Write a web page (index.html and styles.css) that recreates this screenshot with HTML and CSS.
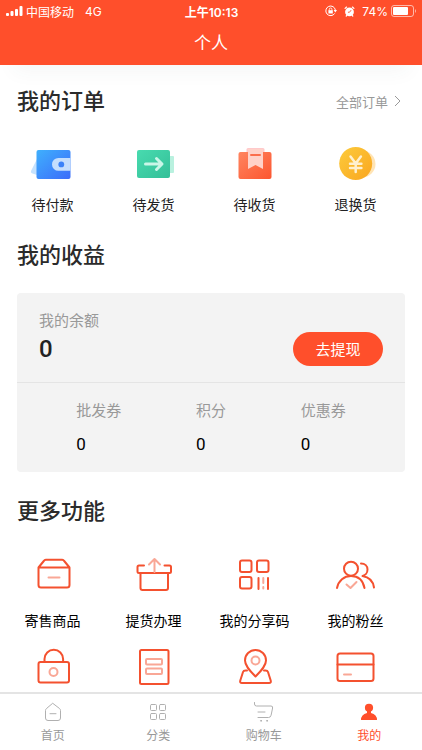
FILE: index.html
```html
<!DOCTYPE html>
<html lang="zh-CN">
<head>
    <meta charset="UTF-8">
    <meta name="viewport" content="width=device-width, initial-scale=1.0">
    <title>个人</title>
    <link rel="stylesheet" href="styles.css">
</head>
<body>

    <header class="header">
        <div class="status-bar">
            <div class="status-left">
                <svg width="17" height="12" viewBox="0 0 17 12" fill="#fff">
                    <rect x="0" y="8" width="3" height="3" rx="1"/>
                    <rect x="4.500" y="6" width="3" height="5" rx="1"/>
                    <rect x="9" y="4" width="3" height="7" rx="1"/>
                    <rect x="13.500" y="1" width="3" height="10" rx="1"/>
                </svg>
                <span>中国移动</span>
                <span class="network">4G</span>
            </div>
            <div class="time">上午10:13</div>
            <div class="status-right">
                <svg width="12" height="12" viewBox="0 0 12 12" fill="none" stroke="#fff">
                    <path d="M9.7 8.4A4.8 4.8 0 1 1 10.4 5.2"/>
                    <path d="M8.6 5h3.4l-1.7 2.4z" fill="#fff" stroke="none"/>
                    <rect x="3.4" y="5.2" width="4.4" height="3.3" fill="#fff" stroke="none"/>
                    <path d="M4.3 5.5V4.3a1.3 1.3 0 0 1 2.6 0v1.2" stroke-width=".8"/>
                </svg>
                <svg class="alarm" width="11" height="11" viewBox="0 0 12 12">
                    <circle cx="6" cy="6.5" r="4.8" fill="#fff"/>
                    <path d="M1.2 2.6L2.8 1.2M10.800 2.6L9.2 1.2M3 10.200l-.6.8M9 10.200l.6.8" stroke="#fff" stroke-width="1.4" stroke-linecap="round"/>
                    <path d="M7.800 4.500L6 6.800H4.300" fill="none" stroke="#ff4f2b"/>
                </svg>
                <span>74%</span>
                <svg width="26" height="12" viewBox="0 0 26 12">
                    <rect x=".5" y=".5" width="22" height="11" rx="2.5" fill="none" stroke="#fff" stroke-opacity=".6"/>
                    <rect x="2" y="2" width="15" height="8" rx="1" fill="#fff"/>
                    <path d="M24 4q2 2 0 4z" fill="#fff" fill-opacity=".6"/>
                </svg>
            </div>
        </div>
        <h1 class="page-title">个人</h1>
    </header>

    <main class="content">
        <section class="orders">
            <div class="section-head">
                <h2>我的订单</h2>
                <a class="all-orders" href="#">全部订单
                    <svg width="7" height="12" viewBox="0 0 7 12" fill="none" stroke="#999"><path d="M1 1l5 5-5 5"/></svg>
                </a>
            </div>
            <div class="menu">
                <a class="menu-item" href="#">
                    <svg class="icon" viewBox="0 0 40 40">
                        <defs>
                            <linearGradient id="blue" x1="0" y1="0" x2="1" y2="1"><stop offset="0" stop-color="#3fb0fd"/><stop offset="1" stop-color="#3c6cfa"/></linearGradient>
                        </defs>
                        <path d="M4 15L-2 27q-.6 1.6.8 2.2L4 31z" fill="#c5e2fe"/>
                        <rect x="3.5" y="6" width="34" height="29" rx="2" fill="url(#blue)"/>
                        <path d="M37.5 14H25.4a6.4 6.4 0 0 0 0 12.8H37.5z" fill="#c4defd"/>
                        <circle cx="28.3" cy="20.4" r="2.9" fill="#3b82f8"/>
                    </svg>
                    <span>待付款</span>
                </a>
                <a class="menu-item" href="#">
                    <svg class="icon" viewBox="0 0 40 40">
                        <defs>
                            <linearGradient id="green" x1="0" y1="0" x2="1" y2="1"><stop offset="0" stop-color="#48dbaf"/><stop offset="1" stop-color="#34bf98"/></linearGradient>
                        </defs>
                        <rect x="30" y="12" width="10" height="17" rx="1" fill="#b9f1df"/>
                        <rect x="3" y="6" width="33" height="28" rx="2" fill="url(#green)"/>
                        <path d="M11.5 20H27M22.5 14.5L28 20l-5.5 5.5" fill="none" stroke="#c9f6e8" stroke-width="3" stroke-linecap="round" stroke-linejoin="round"/>
                    </svg>
                    <span>待发货</span>
                </a>
                <a class="menu-item" href="#">
                    <svg class="icon" viewBox="0 0 40 40">
                        <defs>
                            <linearGradient id="red" x1="0" y1="0" x2="1" y2="1"><stop offset="0" stop-color="#ff8560"/><stop offset="1" stop-color="#fc5630"/></linearGradient>
                        </defs>
                        <rect x="3.5" y="8" width="33" height="27" rx="2" fill="url(#red)"/>
                        <path d="M13 4h15q1.5 0 1.5 1.5V8h-18V5.5Q11.5 4 13 4z" fill="#ffc9cb"/>
                        <path d="M13 5h15v20l-7.500-4L13 25z" fill="#ffd2c9"/>
                        <path d="M16 11h9" stroke="#fb6e4c" stroke-width="2" stroke-linecap="round"/>
                    </svg>
                    <span>待收货</span>
                </a>
                <a class="menu-item" href="#">
                    <svg class="icon" viewBox="0 0 40 40">
                        <defs>
                            <linearGradient id="gold" x1="0" y1="0" x2="1" y2="1"><stop offset="0" stop-color="#fccb3c"/><stop offset="1" stop-color="#faa61f"/></linearGradient>
                        </defs>
                        <circle cx="26" cy="20" r="13.5" fill="#ffe4b5"/>
                        <circle cx="19.7" cy="19.5" r="16.5" fill="url(#gold)"/>
                        <path d="M14.5 12.5l5.2 7 5.2-7M19.7 19.5V28M14 19.7h11.4M14 24h11.4" fill="none" stroke="#fff0cf" stroke-width="2.5" stroke-linecap="round"/>
                    </svg>
                    <span>退换货</span>
                </a>
            </div>
        </section>

        <section class="income">
            <div class="section-head">
                <h2>我的收益</h2>
            </div>
            <div class="card">
                <div class="balance">
                    <div>
                        <p class="label">我的余额</p>
                        <p class="amount">0</p>
                    </div>
                    <button class="withdraw" type="button">去提现</button>
                </div>
                <div class="stats">
                    <div><p class="label">批发券</p><p class="value">0</p></div>
                    <div><p class="label">积分</p><p class="value">0</p></div>
                    <div><p class="label">优惠券</p><p class="value">0</p></div>
                </div>
            </div>
        </section>

        <section class="more">
            <div class="section-head">
                <h2>更多功能</h2>
            </div>
            <div class="menu">
                <a class="menu-item" href="#">
                    <svg class="icon line" viewBox="0 0 40 40">
                        <path d="M5.5 12.5h31V30q0 2.5-2.5 2.5H8q-2.5 0-2.5-2.5zL10.8 6q.7-1.2 2-1.2h16.4q1.3 0 2 1.2l5.3 6.5"/>
                        <path class="soft" d="M15.5 22.5h11"/>
                    </svg>
                    <span>寄售商品</span>
                </a>
                <a class="menu-item" href="#">
                    <svg class="icon line" viewBox="0 0 40 40">
                        <path d="M10 10.5H5q-1.500 0-1.500 1.500v4.500Q3.500 18 5 18h30.500q1.500 0 1.500-1.500V12q0-1.500-1.500-1.500h-5M6.500 18v15q0 2 2 2H32q2 0 2-2V18"/>
                        <path class="soft" d="M20.500 17V4M15 9.500L20.500 4l5.500 5.500"/>
                    </svg>
                    <span>提货办理</span>
                </a>
                <a class="menu-item" href="#">
                    <svg class="icon line" viewBox="0 0 40 40">
                        <rect x="5" y="5.5" width="11.5" height="11.5" rx="2"/>
                        <rect x="22" y="5.5" width="11.5" height="11.5" rx="2"/>
                        <rect x="5" y="22" width="11.5" height="11.5" rx="2"/>
                        <path d="M23.500 23v11M33 23v11"/>
                        <path class="soft" d="M28.300 23v5M28.300 32v1.500"/>
                    </svg>
                    <span>我的分享码</span>
                </a>
                <a class="menu-item" href="#">
                    <svg class="icon line" viewBox="0 0 40 40">
                        <circle cx="15" cy="13.7" r="7"/>
                        <path d="M1 33C2.500 25.500 8 21 15 21s12 4.500 13.500 12M25 8.500c4 0 6.500 2.500 6.500 6S29 20.500 26.500 21c6.500 1 10.500 5 11.500 11.500"/>
                        <path class="soft" d="M10.500 29.500l4 3.500 6-6"/>
                    </svg>
                    <span>我的粉丝</span>
                </a>
                <a class="menu-item" href="#" aria-label="密码">
                    <svg class="icon line" viewBox="0 0 40 40">
                        <rect x="5.5" y="15" width="30.5" height="20.5" rx="2"/>
                        <path d="M11.5 15v-3a9.300 9.300 0 0 1 18.600 0v3"/>
                        <circle class="soft" cx="20.5" cy="25" r="4"/>
                    </svg>
                </a>
                <a class="menu-item" href="#" aria-label="订单">
                    <svg class="icon line" viewBox="0 0 40 40">
                        <rect x="6" y="3" width="28.5" height="34" rx="1.5"/>
                        <rect class="soft" x="12" y="12" width="16" height="5.5" rx="1"/>
                        <rect class="soft" x="12" y="21.5" width="16" height="5.5" rx="1"/>
                    </svg>
                </a>
                <a class="menu-item" href="#" aria-label="地址">
                    <svg class="icon line" viewBox="0 0 40 40">
                        <path d="M20.5 29.5C14 23 10 18.5 10 13.5a10.5 10.5 0 0 1 21 0c0 5-4 9.5-10.5 16z"/>
                        <path d="M12 23.5h-1.5q-2 0-2.5 1.5L5.3 33.5q-.7 2.5 1.7 2.5h27q2.4 0 1.7-2.5L33 25q-.5-1.500-2.500-1.500H29"/>
                        <circle class="soft" cx="20.5" cy="13.5" r="4"/>
                    </svg>
                </a>
                <a class="menu-item" href="#" aria-label="银行卡">
                    <svg class="icon line" viewBox="0 0 40 40">
                        <rect x="1.5" y="6.5" width="36" height="27.5" rx="2.5"/>
                        <path d="M1.5 17.5h36"/>
                        <path class="soft" d="M8 27.5h7"/>
                    </svg>
                </a>
            </div>
        </section>
    </main>

    <nav class="tab-bar">
        <a class="tab" href="#">
            <svg viewBox="0 0 24 24">
                <path d="M12 3.5l6.5 5q1 .8 1 2V18q0 2.5-2.5 2.5H7Q4.5 20.500 4.500 18v-7.500q0-1.200 1-2zM9 13.700h6"/>
            </svg>
            <span>首页</span>
        </a>
        <a class="tab" href="#">
            <svg viewBox="0 0 24 24">
                <rect x="4.5" y="4.5" width="6" height="6" rx="1"/>
                <rect x="13.5" y="4.5" width="6" height="6" rx="1"/>
                <rect x="4.5" y="13.5" width="6" height="6" rx="1"/>
                <rect x="13.5" y="13.5" width="6" height="6" rx="1"/>
            </svg>
            <span>分类</span>
        </a>
        <a class="tab" href="#">
            <svg viewBox="0 0 24 24">
                <path d="M2.5 2.5v1.500q0 2 2 2H19q2 0 1.600 2l-1.500 7.200q-.5 2.300-2.600 2.300H6M6 12h7"/>
                <circle cx="9" cy="20.8" r=".5"/>
                <circle cx="15" cy="20.8" r=".5"/>
            </svg>
            <span>购物车</span>
        </a>
        <a class="tab active" href="#">
            <svg viewBox="0 0 24 24">
                <circle cx="12" cy="7.8" r="4.1"/>
                <path d="M10 11h4v2q6 1.500 6 7H4q0-5.500 6-7z"/>
            </svg>
            <span>我的</span>
        </a>
    </nav>

</body>
</html>
```

FILE: styles.css
```css
* {
    box-sizing: border-box;
}
body {
    display: flex;
    flex-direction: column;
    height: 100vh;
    margin: 0;
    background: #fff;
    color: #222;
    font-family: Inter, "Noto Sans CJK SC", sans-serif;
}
h1, h2, p {
    margin: 0;
}
a {
    color: inherit;
    text-decoration: none;
}
svg {
    display: block;
    flex: none;
}
.header {
    position: relative;
    background: #ff4f2b;
    color: #fff;
    box-shadow: 0 20px 20px -14px rgba(60,80,80,0.05);
}
.status-bar {
    display: grid;
    grid-template-columns: 1fr auto 1fr;
    align-items: center;
    height: 22px;
    padding: 0 5px 0 6px;
    font-size: 12px;
}
.status-left, .status-right {
    display: flex;
    align-items: center;
    gap: 3px;
}
.status-right {
    justify-content: flex-end;
}
.network {
    margin-left: 8px;
}
.alarm {
    margin: 0 4px;
}
.time {
    font-weight: 600;
}
.page-title {
    height: 43px;
    line-height: 42px;
    font-size: 17px;
    font-weight: 400;
    text-align: center;
}
.content {
    flex: 1;
    min-height: 0;
    overflow: hidden;
    padding-top: 21px;
}
.section-head {
    display: flex;
    justify-content: space-between;
    align-items: center;
    height: 30px;
    padding: 0 21px 0 17px;
}
.section-head h2 {
    font-size: 22px;
    line-height: 30px;
    font-weight: 500;
    color: #2b2b2b;
}
.all-orders {
    display: flex;
    align-items: center;
    gap: 6px;
    font-size: 13px;
    color: #999;
}
.menu {
    display: grid;
    grid-template-columns: repeat(4, 1fr);
    row-gap: 16px;
    padding: 28px 16px 0 2px;
}
.menu-item {
    display: flex;
    flex-direction: column;
    align-items: center;
    gap: 11px;
    font-size: 14px;
    line-height: 20px;
}
.icon {
    width: 40px;
    height: 40px;
    overflow: visible;
}
.line {
    fill: none;
    stroke: #f4512f;
    stroke-width: 2;
    stroke-linecap: round;
    stroke-linejoin: round;
}
.line .soft {
    stroke: #f9a796;
}
.income {
    padding-top: 25px;
}
.card {
    margin: 23px 17px 0;
    background: #f3f3f3;
    border-radius: 4px;
}
.balance {
    display: flex;
    justify-content: space-between;
    align-items: center;
    height: 90px;
    padding: 0 22px;
    border-bottom: 1px solid #e4e4e4;
}
.label {
    font-size: 15px;
    line-height: 22px;
    color: #999;
}
.amount, .value {
    font-family: Roboto, sans-serif;
}
.amount {
    font-size: 24px;
    line-height: 34px;
    font-weight: 500;
}
.withdraw {
    width: 90px;
    height: 34px;
    margin-top: 22px;
    padding: 0;
    border: none;
    border-radius: 17px;
    background: #ff4f2b;
    color: #fff;
    font-family: inherit;
    font-size: 15px;
    cursor: pointer;
}
.stats {
    display: flex;
    justify-content: space-around;
    padding: 17px 22px 16px;
}
.value {
    margin-top: 10px;
    font-size: 17px;
    line-height: 24px;
    color: #000;
}
.more {
    padding-top: 24px;
    color: #000;
}
.more .menu {
    padding-top: 29px;
}
.more .menu-item {
    gap: 16px;
}
.tab-bar {
    display: flex;
    height: 58px;
    border-top: 2px solid #e4e4e4;
    background: #fff;
}
.tab {
    display: flex;
    flex: 1;
    flex-direction: column;
    align-items: center;
    gap: 4px;
    padding-top: 6px;
    font-size: 12px;
    line-height: 16px;
    color: #999;
}
.tab svg {
    width: 24px;
    height: 24px;
    fill: none;
    stroke: #b0b0b0;
    stroke-linecap: round;
    stroke-linejoin: round;
}
.tab.active {
    color: #ff4f2b;
}
.tab.active svg {
    fill: #ff4f2b;
    stroke: none;
}
```
